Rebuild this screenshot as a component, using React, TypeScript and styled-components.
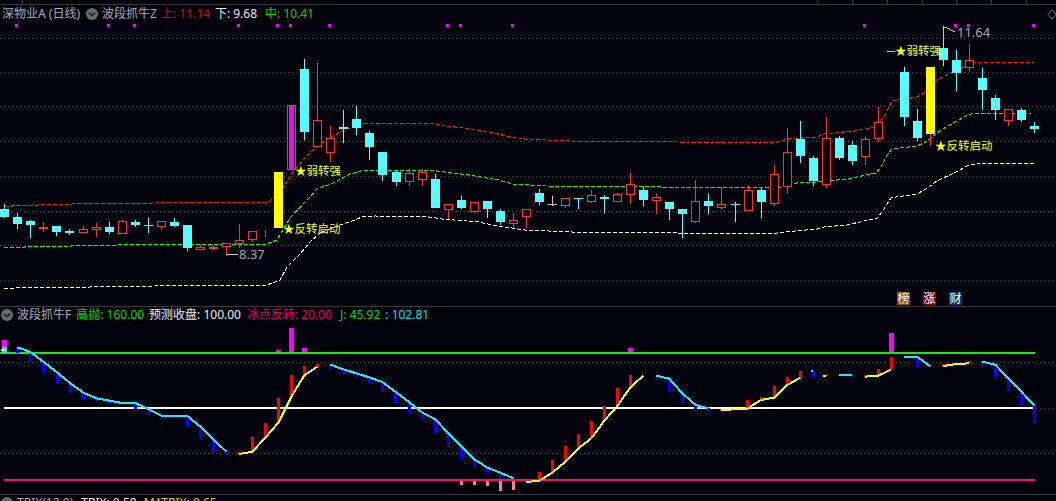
import styled, { createGlobalStyle } from 'styled-components';

const BG = '#02020d';
const CYAN = '#54ffff';
const RED = '#ff3232';
const YELLOW = '#ffff00';
const MAGENTA = '#ff00ff';

type Pt = [number, number];
// bar: [x in zoomed px, top, bottom]; helpers turn 3x measured values into page px
const pts = (ox: number, list: Pt[]): Pt[] => list.map(([x, y]) => [ox + x / 3, 300 + y / 3]);
const bars = (ox: number, list: number[][]) =>
  list.map(([x, a, b]) => ({ x: Math.round(ox + x / 3), top: 300 + a / 3, bottom: 300 + b / 3 }));
const path = (list: Pt[]) => list.map(([x, y]) => `${x},${y}`).join(' ');

// kind, body top, body bottom, wick high, wick low
type Candle = ['c' | 'r' | 'y' | 'm' | 'd' | null, number, number, number, number];
const candles: Candle[] = [
  ['c', 209, 217, 204, 218], ['c', 217, 224, 213, 229], ['c', 221, 225, 220, 238], ['r', 227, 229, 222, 232],
  ['c', 226, 232, 226, 236], ['c', 231, 233, 229, 235], ['r', 229, 233, 226, 233], ['r', 227, 230, 223, 237],
  ['c', 227, 232, 222, 234], ['r', 221, 234, 220, 234], ['c', 222, 225, 220, 227], ['c', 225, 226, 218, 233],
  ['r', 221, 227, 221, 230], ['c', 222, 226, 218, 227], ['c', 225, 248, 225, 251], ['r', 247, 250, 244, 250],
  ['r', 247, 249, 246, 250], ['r', 243, 247, 243, 256], ['r', 240, 244, 224, 248], ['r', 231, 240, 231, 242],
  ['r', 232, 233, 230, 237], ['y', 172, 228, 172, 228], ['m', 105, 170, 105, 170], ['c', 69, 132, 59, 140],
  ['r', 120, 147, 63, 147], ['r', 138, 153, 126, 162], ['c', 127, 129, 110, 143], ['c', 119, 128, 106, 135],
  ['c', 133, 147, 131, 160], ['c', 152, 175, 152, 181], ['c', 172, 182, 170, 186], ['r', 173, 182, 169, 186],
  ['r', 172, 180, 169, 186], ['c', 179, 208, 174, 208], ['r', 204, 210, 204, 219], ['c', 200, 208, 196, 209],
  ['r', 202, 212, 202, 213], ['c', 201, 209, 201, 218], ['c', 211, 222, 209, 225], ['r', 220, 224, 213, 228],
  ['r', 209, 217, 209, 228], ['c', 193, 202, 189, 205], ['d', 204, 205, 196, 206], ['r', 198, 206, 198, 208],
  ['c', 198, 199, 198, 209], ['r', 195, 202, 190, 203], ['c', 197, 199, 195, 213], ['r', 194, 202, 193, 202],
  ['r', 184, 195, 173, 204], ['c', 190, 200, 187, 206], ['r', 197, 201, 193, 214], ['c', 202, 209, 202, 220],
  ['c', 209, 214, 209, 238], ['r', 201, 222, 180, 223], ['c', 201, 206, 194, 214], ['r', 204, 208, 187, 209],
  ['c', 204, 205, 202, 222], ['r', 190, 211, 185, 211], ['c', 190, 202, 188, 218], ['r', 174, 204, 165, 206],
  ['r', 152, 187, 128, 193], ['c', 139, 156, 121, 163], ['c', 158, 181, 156, 186], ['r', 138, 185, 117, 188],
  ['c', 138, 158, 136, 160], ['c', 145, 161, 141, 165], ['r', 139, 157, 137, 165], ['r', 122, 139, 107, 142],
  [null, 0, 0, 0, 0], ['c', 72, 117, 67, 126], ['c', 121, 138, 109, 141], ['y', 67, 134, 67, 146],
  ['c', 48, 60, 26, 66], ['c', 60, 73, 50, 91], ['r', 60, 68, 44, 72], ['c', 78, 90, 68, 110],
  ['c', 98, 110, 95, 120], ['r', 109, 121, 109, 126], ['c', 110, 120, 108, 122], ['c', 126, 129, 122, 133],
];
const candleX = (i: number) => Math.round(4.3 + 13.04 * i);

const redBand: Pt[] = [[5, 207], [12, 206], [38, 205], [107, 203], [155, 203], [267, 202], [270, 201], [283, 188], [287, 182], [293, 172], [305, 158], [311, 152], [322, 143], [338, 133], [352, 127], [362, 124], [429, 123], [445, 126], [465, 128], [489, 132], [507, 136], [525, 139], [569, 141], [675, 142], [777, 142], [787, 139], [817, 137], [824, 134], [854, 131], [874, 127], [884, 117], [892, 101], [917, 97], [926, 92], [937, 80], [949, 74], [964, 67], [974, 62], [1034, 62]];
const greenBand: Pt[] = [[4, 248], [25, 247], [117, 245], [267, 244], [277, 240], [280, 235], [290, 218], [307, 200], [317, 189], [333, 183], [350, 174], [365, 170], [429, 170], [469, 175], [499, 180], [512, 184], [545, 186], [662, 187], [707, 187], [716, 188], [781, 187], [797, 183], [817, 182], [847, 179], [876, 173], [881, 167], [887, 155], [892, 149], [917, 146], [926, 142], [941, 130], [964, 117], [971, 114], [981, 113], [1031, 113]];
const whiteBand: Pt[] = [[4, 289], [25, 287], [90, 287], [155, 286], [267, 285], [280, 280], [287, 267], [300, 254], [310, 242], [320, 233], [340, 225], [352, 221], [362, 217], [375, 216], [429, 217], [442, 219], [479, 222], [492, 225], [525, 230], [572, 232], [675, 232], [677, 233], [777, 233], [784, 232], [817, 229], [824, 227], [847, 225], [877, 218], [882, 212], [891, 198], [896, 197], [917, 194], [926, 189], [937, 181], [956, 172], [967, 166], [979, 163], [1034, 163]];

const gridRows = [38, 72, 106, 141, 176, 211, 245, 280];
const topDots = [16, 108, 134, 238, 277, 290, 329, 447, 460, 512, 864, 955, 968, 1033];
const topTicks = [22, 817, 852, 887, 922, 956, 991, 1026];

const blueBars = [
  ...bars(0, [[52, 142, 160], [91, 155, 186], [130, 180, 219], [172, 215, 252], [211, 245, 279], [250, 275, 297], [289, 295, 302], [328, 302, 311], [406, 308, 328], [445, 325, 345], [484, 345, 351], [562, 348, 381], [601, 378, 417], [640, 415, 456], [679, 450, 465], [991, 194, 209], [1030, 208, 222]]),
  ...bars(352, [[13, 220, 234], [52, 234, 250], [91, 246, 276], [130, 275, 310], [172, 307, 339], [211, 338, 360], [250, 358, 400], [289, 400, 438], [328, 438, 478], [367, 478, 504], [406, 503, 522], [445, 518, 538], [913, 227, 240], [952, 236, 276], [991, 280, 312], [1030, 314, 328]]),
  ...bars(704, [[13, 325, 333], [328, 213, 231], [445, 225, 233], [640, 175, 201], [835, 185, 197], [874, 195, 233], [913, 235, 273], [952, 275, 317], [991, 316, 369]]),
];
const redBars = [
  ...bars(0, [[718, 455, 462], [757, 411, 455], [796, 369, 413], [835, 294, 368], [874, 225, 290], [913, 198, 226], [952, 192, 200]]),
  ...bars(352, [[562, 516, 542], [601, 480, 518], [640, 438, 485], [679, 402, 445], [718, 363, 415], [757, 318, 362], [796, 264, 318], [835, 225, 262]]),
  ...bars(704, [[52, 326, 332], [91, 324, 330], [130, 300, 326], [170, 291, 300], [211, 258, 293], [250, 231, 255], [289, 213, 233], [367, 222, 228], [484, 226, 232], [523, 207, 224], [562, 171, 208], [718, 193, 198], [796, 184, 190]]),
];
const pinkBars = bars(352, [[328, 540, 555], [367, 540, 555], [406, 540, 558], [445, 540, 573], [484, 540, 570]]);
const magentaBars = [
  ...bars(0, [[835, 150, 160], [874, 84, 160], [913, 144, 160]]),
  ...bars(352, [[835, 144, 160]]),
  ...bars(704, [[562, 99, 160]]),
];

const cyanLines: Pt[][] = [
  pts(0, [[52, 143], [65, 146], [91, 156], [130, 185], [172, 218], [211, 250], [250, 278], [289, 295], [328, 302], [367, 309], [406, 309], [445, 327], [484, 347], [562, 348], [601, 380], [640, 418], [679, 455]]),
  [...pts(0, [[991, 194], [1030, 208], [1056, 216]]), ...pts(352, [[52, 232], [91, 246], [130, 275], [172, 307], [211, 338], [250, 358], [289, 400], [328, 438], [367, 478], [406, 503], [445, 518], [484, 535]])],
  [...pts(352, [[913, 227], [952, 236], [991, 280], [1030, 314], [1056, 322]]), ...pts(704, [[13, 325]])],
  pts(704, [[320, 213], [328, 213]]),
  pts(704, [[406, 225], [445, 225]]),
  pts(704, [[601, 171], [640, 171], [679, 199]]),
  pts(704, [[835, 185], [874, 194], [913, 235], [952, 275], [991, 316]]),
];
const yellowLines: Pt[][] = [
  pts(0, [[718, 462], [757, 455], [796, 413], [835, 368], [874, 290], [913, 226], [952, 200]]),
  pts(352, [[523, 546], [562, 542], [601, 518], [640, 485], [679, 445], [718, 415], [757, 362], [796, 318], [835, 262], [874, 227]]),
  pts(704, [[52, 330], [91, 328], [130, 326], [170, 300], [211, 293], [250, 255], [289, 233]]),
  pts(704, [[358, 229], [367, 226]]),
  pts(704, [[484, 230], [523, 227], [562, 208]]),
  pts(704, [[718, 198], [757, 192], [796, 190]]),
];

const GlobalStyle = createGlobalStyle`
  html, body {
    margin: 0;
    background: ${BG};
  }
`;

const Page = styled.div`
  width: 1056px;
  height: 501px;
  overflow: hidden;
  display: flex;
  flex-direction: column;
  background: ${BG};
  font-family: 'Noto Sans', 'Noto Sans CJK SC', sans-serif;
  font-size: 12px;
  line-height: 16px;
`;

const Pane = styled.section<{ $height: number }>`
  position: relative;
  flex: none;
  height: ${({ $height }) => $height}px;
  border-bottom: 1px solid #3a3a3a;
`;

const Chart = styled.svg`
  display: block;
`;

const Legend = styled.div<{ $left: number; $top: number }>`
  position: absolute;
  left: ${({ $left }) => $left}px;
  top: ${({ $top }) => $top}px;
  display: flex;
  align-items: center;
  white-space: nowrap;
`;

const Item = styled.span<{ $color: string; $gap?: number }>`
  color: ${({ $color }) => $color};
  margin-left: ${({ $gap }) => $gap ?? 0}px;
`;

const Collapse = styled.svg<{ $gap?: number }>`
  flex: none;
  margin: 0 4px 0 ${({ $gap }) => $gap ?? 0}px;
`;

const Footer = styled.div`
  position: relative;
  flex: 1;
  overflow: hidden;
`;

const BadgeRow = styled.div`
  position: absolute;
  left: 897px;
  top: 292px;
  display: flex;
  gap: 13px;
`;

const Badge = styled.span<{ $bg: string }>`
  width: 13px;
  height: 13px;
  background: ${({ $bg }) => $bg};
  color: #fff;
  font-size: 12px;
  line-height: 13px;
  text-align: center;
`;

const Tag = styled.text`
  fill: ${YELLOW};
  font-family: 'Noto Sans CJK SC', sans-serif;
  font-size: 11.5px;
`;

const PriceNote = styled.text`
  fill: #a3aab5;
  font-family: 'Noto Sans', sans-serif;
  font-size: 13px;
`;

const CollapseIcon = ({ gap }: { gap?: number }) => (
  <Collapse $gap={gap} width="12" height="12" viewBox="0 0 12 12">
    <circle cx="6" cy="6" r="6" fill="#6a6a6a" />
    <path d="M3 4.8 6 7.8 9 4.8" fill="none" stroke="#1c1c1c" strokeWidth="1.4" />
  </Collapse>
);

const CandleMark = ({ candle, index }: { candle: Candle; index: number }) => {
  const [kind, top, bottom, high, low] = candle;
  if (!kind) return null;
  const x = candleX(index);
  if (kind === 'y') {
    return (
      <g>
        {low > bottom && <rect x={x} y={bottom} width="1" height={low - bottom} fill={RED} />}
        <rect x={x - 4} y={top} width="9" height={bottom - top} fill={YELLOW} />
      </g>
    );
  }
  if (kind === 'm') {
    return (
      <g>
        <rect x={x - 3.5} y={top + 0.5} width="8" height={bottom - top - 1} fill={BG} stroke={RED} />
        <rect x={x - 2} y={top + 1} width="5" height={bottom - top - 2} fill={MAGENTA} />
      </g>
    );
  }
  const color = kind === 'c' ? CYAN : kind === 'r' ? RED : '#c8c8c8';
  return (
    <g>
      <rect x={x} y={high} width="1" height={low - high} fill={color} />
      {kind === 'c' && <rect x={x - 4} y={top} width="9" height={Math.max(bottom - top, 1)} fill={color} />}
      {kind === 'r' && <rect x={x - 3.5} y={top + 0.5} width="8" height={bottom - top - 1} fill={BG} stroke={color} />}
      {kind === 'd' && <rect x={x - 4} y={top} width="9" height="1" fill={color} />}
    </g>
  );
};

const PriceChart = () => (
  <Chart width="1056" height="305" viewBox="0 0 1056 305" shapeRendering="crispEdges">
    <rect x="0" y="4" width="1056" height="1" fill="#3a3a3a" />
    {topTicks.map((x) => (
      <rect key={x} x={x} y="0" width="1" height="4" fill="#3a3a3a" />
    ))}
    {gridRows.map((y) => (
      <line key={y} x1="0" x2="1056" y1={y + 0.5} y2={y + 0.5} stroke="#3d3d3d" strokeDasharray="1 3" />
    ))}
    {topDots.map((x) => (
      <rect key={x} x={x - 1} y="24" width="3" height="3" fill={MAGENTA} />
    ))}
    <polyline points={path(whiteBand)} fill="none" stroke="#fff" strokeDasharray="4 2" />
    <polyline points={path(greenBand)} fill="none" stroke="#00ff00" strokeDasharray="4 2" />
    <polyline points={path(redBand)} fill="none" stroke="#ff1010" strokeDasharray="4 2" />
    {candles.map((candle, i) => (
      <CandleMark key={i} candle={candle} index={i} />
    ))}
    <path d="M1052 10 1056 14 1056 15 1052 19 1048 14.5Z" fill="none" stroke="#666" shapeRendering="auto" />
    <Tag x="295" y="175" shapeRendering="auto">★弱转强</Tag>
    <Tag x="283" y="233" shapeRendering="auto">★反转启动</Tag>
    <Tag x="895" y="55" shapeRendering="auto">★弱转强</Tag>
    <Tag x="935" y="150" shapeRendering="auto">★反转启动</Tag>
    <rect x="887" y="51" width="8" height="1" fill="#ff9cff" />
    <rect x="227" y="254" width="11" height="1" fill="#c8c8c8" />
    <PriceNote x="239" y="259" shapeRendering="auto">8.37</PriceNote>
    <path d="M944 27h3M947 28l8 4" fill="none" stroke="#c8c8c8" />
    <PriceNote x="957" y="37" shapeRendering="auto">11.64</PriceNote>
  </Chart>
);

const IndicatorChart = () => (
  <Chart width="1056" height="186" viewBox="0 307 1056 186" shapeRendering="crispEdges">
    <line x1="0" x2="1056" y1="362.5" y2="362.5" stroke="#3d3d3d" strokeDasharray="1 3" />
    <line x1="0" x2="1056" y1="408.5" y2="408.5" stroke="#3d3d3d" strokeDasharray="1 3" />
    <line x1="0" x2="1056" y1="453.5" y2="453.5" stroke="#3d3d3d" strokeDasharray="1 3" />
    {magentaBars.map((b) => (
      <rect key={b.x} x={b.x - 2} y={b.top} width="5" height={b.bottom - b.top} fill={MAGENTA} />
    ))}
    <rect x="2" y="340" width="5" height="13" fill={MAGENTA} />
    <rect x="0" y="352" width="1035" height="2" fill="#10f010" />
    <rect x="4" y="407" width="1031" height="2" fill="#fff" />
    <rect x="4" y="479" width="1031" height="2" fill="#ff0a6e" />
    {blueBars.map((b) => (
      <rect key={`${b.x}-${b.top}`} x={b.x - 1} y={b.top} width="3" height={b.bottom - b.top} fill="#0000ff" />
    ))}
    {redBars.map((b) => (
      <rect key={`${b.x}-${b.top}`} x={b.x - 1} y={b.top} width="3" height={b.bottom - b.top} fill="#ff0000" />
    ))}
    {pinkBars.map((b) => (
      <rect key={b.x} x={b.x - 1} y={b.top + 1} width="3" height={b.bottom - b.top - 1} fill="#ff8080" />
    ))}
    {cyanLines.map((line, i) => (
      <polyline key={i} points={path(line)} fill="none" stroke="#10eeff" strokeWidth="2" />
    ))}
    {yellowLines.map((line, i) => (
      <polyline key={i} points={path(line)} fill="none" stroke={YELLOW} strokeWidth="2" />
    ))}
    <rect x="2" y="347" width="5" height="6" fill="#10eeff" />
    <rect x="1" y="349" width="4" height="2" fill={YELLOW} />
  </Chart>
);

const App = () => (
  <Page>
    <GlobalStyle />
    <Pane $height={306}>
      <PriceChart />
      <Legend $left={2} $top={6}>
        <Item $color="#a4acb8">深物业A (日线)</Item>
        <CollapseIcon gap={6} />
        <Item $color="#a4acb8">波段抓牛Z</Item>
        <Item $color="#e00000" $gap={4}>上: 11.14</Item>
        <Item $color="#e8e8e8" $gap={5}>下: 9.68</Item>
        <Item $color="#00d800" $gap={8}>中: 10.41</Item>
      </Legend>
      <BadgeRow>
        <Badge $bg="#8a4c10">榜</Badge>
        <Badge $bg="#7c0808">涨</Badge>
        <Badge $bg="#0a3866">财</Badge>
      </BadgeRow>
    </Pane>
    <Pane $height={187}>
      <IndicatorChart />
      <Legend $left={1} $top={0}>
        <CollapseIcon />
        <Item $color="#a4acb8">波段抓牛F</Item>
        <Item $color="#00d800" $gap={5}>高抛: 160.00</Item>
        <Item $color="#f0f0f0" $gap={5}>预测收盘: 100.00</Item>
        <Item $color="#e0006a" $gap={6}>冰点反转: 20.00</Item>
        <Item $color="#00d800" $gap={8}>J: 45.92</Item>
        <Item $color="#00e0e8" $gap={5}>: 102.81</Item>
      </Legend>
    </Pane>
    <Footer>
      <Legend $left={1} $top={0}>
        <CollapseIcon />
        <Item $color="#a4acb8">TRIX(12,9)</Item>
        <Item $color="#e8e8e8" $gap={8}>TRIX: 0.58</Item>
        <Item $color="#d8d800" $gap={7}>MATRIX: 0.65</Item>
      </Legend>
    </Footer>
  </Page>
);

export default App;
